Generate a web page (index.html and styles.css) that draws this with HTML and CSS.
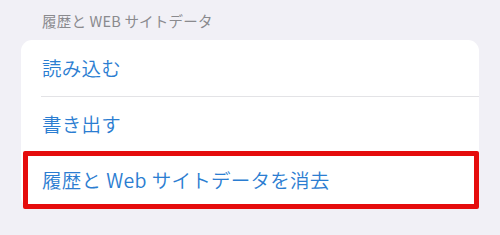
FILE: index.html
```html
<!DOCTYPE html>
<html lang="ja">
<head>
    <meta charset="UTF-8">
    <meta name="viewport" content="width=device-width, initial-scale=1.0">
    <title>履歴と WEB サイトデータ</title>
    <link rel="stylesheet" href="styles.css">
</head>
<body>
    <!-- Section -->
    <div class="section">
        <h3 class="section-title">履歴と WEB サイトデータ</h3>
        <ul class="group">
            <li class="row"><a href="#">読み込む</a></li>
            <li class="row"><a href="#">書き出す</a></li>
            <li class="row marked">
                <a href="#">履歴と<span class="gap"></span>Web<span class="gap"></span>サイトデータを消去</a>
                <span class="highlight"></span>
            </li>
        </ul>
    </div>
</body>
</html>
```

FILE: styles.css
```css
* {
    margin: 0;
    padding: 0;
    box-sizing: border-box;
    font-family: "Noto Sans CJK JP", "Noto Sans", sans-serif;
}

body {
    background-color: #f1f0f6;
    width: 500px;
    height: 235px;
    overflow: hidden;
}

/* Section */
.section {
    padding: 0 21px;
}

.section-title {
    height: 40px;
    display: flex;
    align-items: center;
    padding-left: 21px;
    padding-top: 1px;
    font-size: 14.5px;
    font-weight: 400;
    color: #8a8a8e;
    letter-spacing: 0.2px;
}

.group {
    list-style: none;
    background-color: #fff;
    border-radius: 11px;
}

.row {
    position: relative;
    height: 56px;
    display: flex;
    align-items: center;
    padding-left: 21px;
    padding-bottom: 2px;
}

.row + .row::before {
    content: "";
    position: absolute;
    top: 0;
    left: 20px;
    right: 0;
    border-top: 1px solid #e3e3e6;
}

.row a {
    color: #2b7dd1;
    text-decoration: none;
    font-size: 19.5px;
    font-weight: 350;
    letter-spacing: 0.25px;
}

.gap {
    display: inline-block;
    width: 5px;
}

/* Red highlight over the last row */
.highlight {
    position: absolute;
    top: -1px;
    left: 2px;
    right: 0;
    bottom: -1px;
    border: 5px solid #e50c0c;
    border-radius: 2px;
}
```
